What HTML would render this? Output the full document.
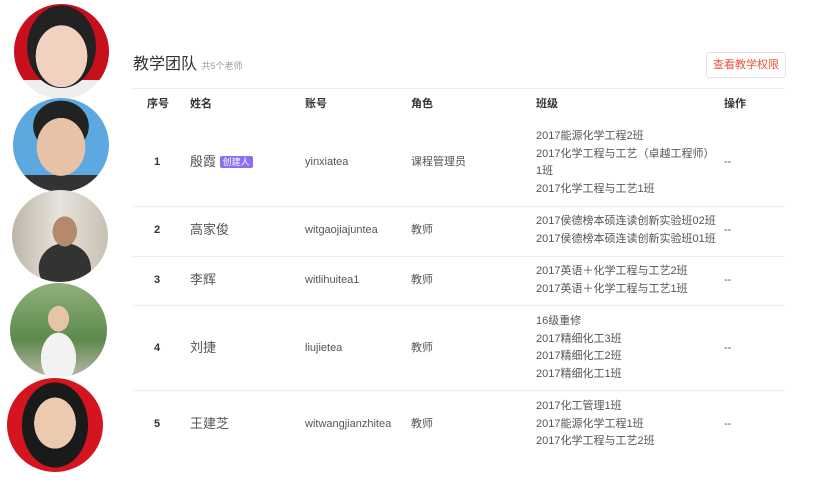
<!DOCTYPE html><html><head><meta charset="utf-8"><style>
*{margin:0;padding:0;box-sizing:border-box}
body{width:831px;height:501px;background:#fff;font-family:"Liberation Sans","Noto Sans CJK SC",sans-serif;position:relative;overflow:hidden;color:#555}
.av{position:absolute;border-radius:50%;overflow:hidden}
.t{position:absolute;font-size:11px;color:#555;white-space:nowrap;line-height:14px}
.h{font-weight:bold;color:#333}
.line{position:absolute;left:133px;width:652px;height:1px;background:#eee}
.c{line-height:17.5px}
.n{font-size:13px;line-height:14px}
</style></head><body>
<div class="av" style="left:14px;top:4px;width:95px;height:95px;background:radial-gradient(ellipse 30% 36% at 50% 55%,#f1d2c0 0 90%,transparent 91%),radial-gradient(ellipse 40% 48% at 50% 45%,#222 0 90%,transparent 91%),linear-gradient(#c8101c 0 80%,#eee 80%)"></div>
<div class="av" style="left:13px;top:98px;width:96px;height:94px;background:radial-gradient(ellipse 28% 34% at 50% 52%,#e8c2a6 0 90%,transparent 91%),radial-gradient(ellipse 32% 30% at 50% 30%,#222 0 90%,transparent 91%),linear-gradient(#5da8e0 0 82%,#333 82%)"></div>
<div class="av" style="left:12px;top:190px;width:96px;height:92px;background:radial-gradient(ellipse 14% 18% at 55% 45%,#b58a6a 0 90%,transparent 91%),radial-gradient(ellipse 30% 30% at 55% 85%,#333 0 90%,transparent 91%),linear-gradient(90deg,#bdb5a8,#e8e4dc 50%,#c7c0b3)"></div>
<div class="av" style="left:10px;top:283px;width:97px;height:94px;background:radial-gradient(ellipse 12% 15% at 50% 38%,#e6c4a8 0 90%,transparent 91%),radial-gradient(ellipse 20% 30% at 50% 80%,#f2f2f2 0 90%,transparent 91%),linear-gradient(#8fb07a,#5d8a4c 60%,#b9b5a8)"></div>
<div class="av" style="left:7px;top:378px;width:96px;height:94px;background:radial-gradient(ellipse 24% 30% at 50% 48%,#eccab0 0 90%,transparent 91%),radial-gradient(ellipse 38% 50% at 50% 50%,#1a1a1a 0 90%,transparent 91%),#d4141e"></div>
<div class="t" style="left:133px;top:56px;font-size:16px;line-height:18px;color:#333">教学团队 <span style="font-size:9px;color:#999">共5个老师</span></div>
<div style="position:absolute;left:706px;top:52px;width:80px;height:26px;border:1px solid #e3e3e3;border-radius:3px;color:#e8553f;font-size:11px;text-align:center;line-height:24px">查看教学权限</div>
<div class="line" style="top:88px"></div>
<div class="t h" style="left:147px;top:97px">序号</div><div class="t h" style="left:190px;top:97px">姓名</div><div class="t h" style="left:305px;top:97px">账号</div><div class="t h" style="left:411px;top:97px">角色</div><div class="t h" style="left:536px;top:97px">班级</div><div class="t h" style="left:724px;top:97px">操作</div>
<div class="t h" style="left:154px;top:155px">1</div><div class="t n" style="left:190px;top:155px">殷霞 <span style="background:#8b6ff0;color:#fff;font-size:9px;padding:1px 3px;border-radius:2px;vertical-align:1px">创建人</span></div><div class="t" style="left:305px;top:155px">yinxiatea</div><div class="t" style="left:411px;top:155px">课程管理员</div>
<div class="t c" style="left:536px;top:128px">2017能源化学工程2班<br>2017化学工程与工艺（卓越工程师）<br>1班<br>2017化学工程与工艺1班</div><div class="t" style="left:724px;top:155px">--</div>
<div class="line" style="top:206px"></div>
<div class="t h" style="left:154px;top:223px">2</div><div class="t n" style="left:190px;top:223px">高家俊</div><div class="t" style="left:305px;top:223px">witgaojiajuntea</div><div class="t" style="left:411px;top:223px">教师</div>
<div class="t c" style="left:536px;top:213px">2017侯德榜本硕连读创新实验班02班<br>2017侯德榜本硕连读创新实验班01班</div><div class="t" style="left:724px;top:223px">--</div>
<div class="line" style="top:256px"></div>
<div class="t h" style="left:154px;top:273px">3</div><div class="t n" style="left:190px;top:273px">李辉</div><div class="t" style="left:305px;top:273px">witlihuitea1</div><div class="t" style="left:411px;top:273px">教师</div>
<div class="t c" style="left:536px;top:263px">2017英语＋化学工程与工艺2班<br>2017英语＋化学工程与工艺1班</div><div class="t" style="left:724px;top:273px">--</div>
<div class="line" style="top:305px"></div>
<div class="t h" style="left:154px;top:341px">4</div><div class="t n" style="left:190px;top:341px">刘捷</div><div class="t" style="left:305px;top:341px">liujietea</div><div class="t" style="left:411px;top:341px">教师</div>
<div class="t c" style="left:536px;top:313px">16级重修<br>2017精细化工3班<br>2017精细化工2班<br>2017精细化工1班</div><div class="t" style="left:724px;top:341px">--</div>
<div class="line" style="top:390px"></div>
<div class="t h" style="left:154px;top:417px">5</div><div class="t n" style="left:190px;top:417px">王建芝</div><div class="t" style="left:305px;top:417px">witwangjianzhitea</div><div class="t" style="left:411px;top:417px">教师</div>
<div class="t c" style="left:536px;top:398px">2017化工管理1班<br>2017能源化学工程1班<br>2017化学工程与工艺2班</div><div class="t" style="left:724px;top:417px">--</div>
</body></html>
